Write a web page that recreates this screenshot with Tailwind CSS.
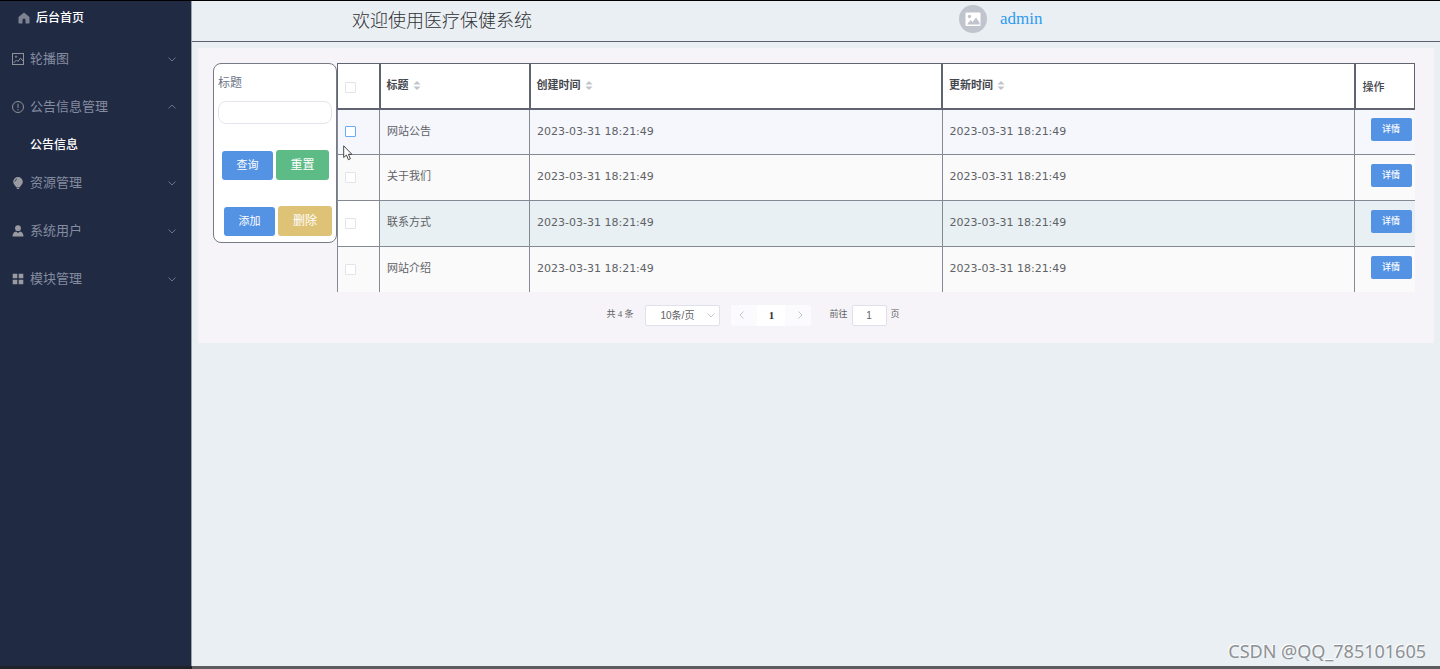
<!DOCTYPE html>
<html lang="zh-CN">
<head>
<meta charset="utf-8">
<meta name="viewport" content="width=device-width, initial-scale=1">
<title>医疗保健系统</title>
<script src="https://cdn.jsdelivr.net/npm/@tailwindcss/browser@4"></script>
</head>
<body class="relative flex min-h-screen flex-col border-t border-black bg-[#eaeff3] font-['Liberation_Sans','Noto_Sans_CJK_SC',sans-serif] text-[#606266]">
<svg class="hidden" aria-hidden="true">
  <symbol id="down" viewBox="0 0 10 10"><path d="M1.5 3.5 5 7l3.500-3.500" fill="none" stroke="currentColor"/></symbol>
  <symbol id="sort" viewBox="0 0 8 10"><path d="M4 0 8 4H0zM4 10 0 6h8z" fill="currentColor"/></symbol>
</svg>
<div class="flex flex-1">
  <aside class="w-48 shrink-0 border-r border-[#9aa1ad] bg-[#202a43] text-[13px] text-[#858ca0]">
    <nav>
      <a href="#" class="flex h-[34px] items-center gap-[6px] pl-[18px] text-xs font-medium text-white">
        <svg class="h-3 w-3 text-[#7d8290]" viewBox="0 0 12 12" fill="currentColor"><path d="M6 .5 11.500 5v6a.5.5 0 0 1-.5.5H7.500V8a1.500 1.500 0 0 0-3 0v3.500H1a.5.5 0 0 1-.5-.5V5z"/></svg>
        后台首页</a>
      <button class="flex h-12 w-full items-center gap-[6px] pr-[14px] pl-3">
        <svg class="h-3 w-3 text-[#8f929b]" viewBox="0 0 12 12" fill="none" stroke="currentColor"><rect x=".5" y=".5" width="11" height="11"/><path d="M1.500 10 4.500 7l1.500 1.500L8.500 5l2.500 3"/><circle cx="4" cy="3.700" r=".7"/></svg>
        <span class="flex-1 text-left">轮播图</span><svg class="h-[10px] w-[10px] text-[#6c748a]"><use href="#down"/></svg></button>
      <button class="flex h-12 w-full items-center gap-[6px] pr-[14px] pl-3">
        <svg class="h-3 w-3 text-[#8f929b]" viewBox="0 0 12 12" fill="none" stroke="currentColor"><circle cx="6" cy="6" r="5.500"/><path d="M6 2.700v4.300M6 8.200v1.200"/></svg>
        <span class="flex-1 text-left">公告信息管理</span><svg class="h-[10px] w-[10px] rotate-180 text-[#6c748a]"><use href="#down"/></svg></button>
      <a href="#" class="flex h-7 items-center pl-[30px] text-xs font-medium text-white">公告信息</a>
      <button class="flex h-12 w-full items-center gap-[6px] pr-[14px] pl-3">
        <svg class="h-3 w-3 text-[#999ba1]" viewBox="0 0 12 12" fill="currentColor"><path d="M6 0a4.800 4.800 0 0 1 4.800 4.800C10.800 7 9 8.500 8 10H4C3 8.500 1.200 7 1.200 4.800A4.800 4.800 0 0 1 6 0zM4.500 10.500h3V11L6.800 12H5.200l-.7-1z"/><path d="M3 4.500Q3.200 2.500 5 2" fill="none" stroke="#202a43" stroke-width=".7"/></svg>
        <span class="flex-1 text-left">资源管理</span><svg class="h-[10px] w-[10px] text-[#6c748a]"><use href="#down"/></svg></button>
      <button class="flex h-12 w-full items-center gap-[6px] pr-[14px] pl-3">
        <svg class="h-3 w-3 text-[#999ba1]" viewBox="0 0 12 12" fill="currentColor"><circle cx="6" cy="3.200" r="2.900"/><path d="M.5 11.500C.5 8.500 2 7 4 6.500l2 1.500 2-1.500c2 .5 3.500 2 3.500 5z"/></svg>
        <span class="flex-1 text-left">系统用户</span><svg class="h-[10px] w-[10px] text-[#6c748a]"><use href="#down"/></svg></button>
      <button class="flex h-12 w-full items-center gap-[6px] pr-[14px] pl-3">
        <svg class="h-3 w-3 text-[#999ba1]" viewBox="0 0 12 12" fill="currentColor"><path d="M.7.7h4.600v4.600H.7zM6.700.7h4.600v4.600H6.700zM.7 6.700h4.600v4.600H.7zM6.700 6.700h4.600v4.600H6.700z"/></svg>
        <span class="flex-1 text-left">模块管理</span><svg class="h-[10px] w-[10px] text-[#6c748a]"><use href="#down"/></svg></button>
    </nav>
  </aside>
  <div class="min-w-0 flex-1">
    <header class="flex h-[41px] border-b border-[#5b626d] pb-1">
      <div class="flex w-[767px] items-center pl-40">
        <h1 class="font-['KaiTi','Noto_Sans_CJK_SC',serif] text-lg leading-6 font-light text-[#303133]">欢迎使用医疗保健系统</h1>
      </div>
      <div class="flex items-center gap-[13px]">
        <svg class="h-7 w-7" viewBox="0 0 28 28"><circle cx="14" cy="14" r="14" fill="#c0c4cc"/><rect x="6.500" y="7.500" width="15" height="13.500" rx="1" fill="#fff"/><circle cx="10.500" cy="11.500" r="1.700" fill="#c0c4cc"/><path d="M8 19.500 11.500 15l2 2 3.500-4.500 3.500 5v2z" fill="#c0c4cc"/></svg>
        <a href="#" class="font-['Liberation_Serif',serif] text-[17px] text-[#2e9bf0]">admin</a>
      </div>
    </header>
    <main class="mt-[6px] mr-[6px] ml-[6px] bg-[#f6f4f8] pt-[15px] pr-[19px] pb-[17px] pl-[15px]">
      <div class="flex items-start">
        <form class="w-[124px] shrink-0 rounded-lg border border-[#777b86] bg-white px-1 pt-[9px] pb-[6px]">
          <label for="title" class="block text-xs leading-5 text-[#6b7388]">标题</label>
          <input id="title" type="text" class="mt-2 block h-[23px] w-full rounded-lg border border-[#e4e6ee] bg-white px-2 text-xs">
          <div class="mt-[26px] flex items-center gap-[3px] pl-1 text-[11px] text-white">
            <button type="button" class="h-[29px] w-[51px] rounded-[3px] bg-[#5492e4]">查询</button>
            <button type="button" class="h-[30px] w-[53px] rounded-[3px] bg-[#5dbb86] text-xs">重置</button>
          </div>
          <div class="mt-[26px] flex items-center justify-end gap-[3px] text-[11px] text-white">
            <button type="button" class="h-[29px] w-[51px] rounded-[3px] bg-[#5492e4]">添加</button>
            <button type="button" class="h-[30px] w-[54px] rounded-[3px] bg-[#dec275] text-xs">删除</button>
          </div>
        </form>
        <div class="min-w-0 flex-1">
          <table class="w-full table-fixed border-collapse text-left text-[11px] font-['DejaVu_Sans','Noto_Sans_CJK_SC',sans-serif]">
            <colgroup><col class="w-[42px]"><col class="w-[150px]"><col><col><col class="w-[60px]"></colgroup>
            <thead class="bg-white text-[#44474e]">
              <tr class="h-[45px] border border-b-2 border-[#5f646f]">
                <th class="border-r-2 border-[#5f646f] pt-1 pl-[7px]"><input type="checkbox" aria-label="全选" class="block h-[11px] w-[11px] appearance-none rounded-[1px] border border-[#e2e4ec] bg-white"></th>
                <th class="border-r-2 border-[#5f646f] pl-[6px]"><span class="flex items-center gap-1">标题<svg class="h-[9px] w-2 text-[#c0c4cc]"><use href="#sort"/></svg></span></th>
                <th class="border-r-2 border-[#5f646f] pl-[6px]"><span class="flex items-center gap-1">创建时间<svg class="h-[9px] w-2 text-[#c0c4cc]"><use href="#sort"/></svg></span></th>
                <th class="border-r-2 border-[#5f646f] pl-[6px]"><span class="flex items-center gap-1">更新时间<svg class="h-[9px] w-2 text-[#c0c4cc]"><use href="#sort"/></svg></span></th>
                <th class="pt-1 pl-[7px] font-medium">操作</th>
              </tr>
            </thead>
            <tbody>
              <tr class="h-[46px] border-b border-l border-[#858993] bg-[#f5f7fd]">
                <td class="border-r border-[#858993] pl-[7px]"><input type="checkbox" aria-label="网站公告" class="block h-[11px] w-[11px] appearance-none rounded-[1px] border border-[#66adf5] bg-white"></td>
                <td class="border-r border-[#858993] pl-[7px]">网站公告</td>
                <td class="border-r border-[#858993] pl-[7px]">2023-03-31 18:21:49</td>
                <td class="border-r border-[#858993] pl-[7px]">2023-03-31 18:21:49</td>
                <td class="pr-[3px] pb-1"><button class="ml-auto block h-[23px] w-[41px] rounded-[2px] bg-[#5492e4] text-[9px] font-medium text-white">详情</button></td>
              </tr>
              <tr class="h-[46px] border-b border-l border-[#858993] bg-[#fafafa]">
                <td class="border-r border-[#858993] pl-[7px]"><input type="checkbox" aria-label="关于我们" class="block h-[11px] w-[11px] appearance-none rounded-[1px] border border-[#e2e4ec] bg-white"></td>
                <td class="border-r border-[#858993] pl-[7px]">关于我们</td>
                <td class="border-r border-[#858993] pl-[7px]">2023-03-31 18:21:49</td>
                <td class="border-r border-[#858993] pl-[7px]">2023-03-31 18:21:49</td>
                <td class="pr-[3px] pb-1"><button class="ml-auto block h-[23px] w-[41px] rounded-[2px] bg-[#5492e4] text-[9px] font-medium text-white">详情</button></td>
              </tr>
              <tr class="h-[46px] border-b border-l border-[#858993] bg-[#e8f0f3]">
                <td class="border-r border-[#858993] bg-white pl-[7px]"><input type="checkbox" aria-label="联系方式" class="block h-[11px] w-[11px] appearance-none rounded-[1px] border border-[#e2e4ec] bg-white"></td>
                <td class="border-r border-[#858993] pl-[7px]">联系方式</td>
                <td class="border-r border-[#858993] pl-[7px]">2023-03-31 18:21:49</td>
                <td class="border-r border-[#858993] pl-[7px]">2023-03-31 18:21:49</td>
                <td class="pr-[3px] pb-1"><button class="ml-auto block h-[23px] w-[41px] rounded-[2px] bg-[#5492e4] text-[9px] font-medium text-white">详情</button></td>
              </tr>
              <tr class="h-[45px] border-l border-[#858993] bg-[#fafafa]">
                <td class="border-r border-[#858993] pl-[7px]"><input type="checkbox" aria-label="网站介绍" class="block h-[11px] w-[11px] appearance-none rounded-[1px] border border-[#e2e4ec] bg-white"></td>
                <td class="border-r border-[#858993] pl-[7px]">网站介绍</td>
                <td class="border-r border-[#858993] pl-[7px]">2023-03-31 18:21:49</td>
                <td class="border-r border-[#858993] pl-[7px]">2023-03-31 18:21:49</td>
                <td class="pr-[3px] pb-1"><button class="ml-auto block h-[23px] w-[41px] rounded-[2px] bg-[#5492e4] text-[9px] font-medium text-white">详情</button></td>
              </tr>
            </tbody>
          </table>
        </div>
      </div>
      <div class="mt-[13px] flex items-center justify-center pr-[122px] font-['Liberation_Serif','Noto_Sans_CJK_SC',serif] text-[9px]">
        <span>共 4 条</span>
        <div class="relative ml-3 h-[21px] w-[75px]">
          <select aria-label="每页条数" class="block h-full w-full appearance-none rounded-[2px] border border-[#dfe2ea] bg-white pl-[14px] font-['Liberation_Sans','Noto_Sans_CJK_SC',sans-serif] text-[10px]"><option>10条/页</option></select>
          <svg class="pointer-events-none absolute top-[5px] right-1 h-[10px] w-[10px] text-[#c0c4cc]"><use href="#down"/></svg>
        </div>
        <div class="ml-[11px] flex h-[21px] overflow-hidden rounded-[2px] bg-[#fbfafc] text-[#c0c4cc]">
          <button aria-label="上一页" class="flex w-[26px] items-center justify-center pr-1"><svg class="h-[10px] w-[10px] rotate-90"><use href="#down"/></svg></button>
          <button class="w-7 bg-white text-[11px] font-bold text-[#303133]">1</button>
          <button aria-label="下一页" class="flex w-[26px] items-center justify-center pl-1"><svg class="h-[10px] w-[10px] -rotate-90"><use href="#down"/></svg></button>
        </div>
        <label for="page" class="ml-[18px]">前往</label>
        <input id="page" type="text" value="1" class="mr-1 ml-1 h-[21px] w-[35px] rounded-[2px] border border-[#dfe2ea] bg-white text-center font-['Liberation_Sans',sans-serif] text-[10px]">
        <span>页</span>
      </div>
    </main>
  </div>
</div>
<footer class="flex h-[3px]"><div class="w-48 bg-[#20222a]"></div><div class="flex-1 bg-[#5c5c5e]"></div></footer>
<svg class="absolute top-36 left-[343px] h-4 w-[10px]" viewBox="0 0 10 16"><path d="M.7.8v11.700l2.700-2.500 2 4.700 2-.9-2-4.500h3.500z" fill="#fff" stroke="#333" stroke-width=".9"/></svg>
<p class="absolute right-[14px] bottom-1 font-['Noto_Sans',sans-serif] text-lg text-[#8d9194] [text-shadow:-1px_-1px_0_#fff]">CSDN @QQ_785101605</p>
</body>
</html>
